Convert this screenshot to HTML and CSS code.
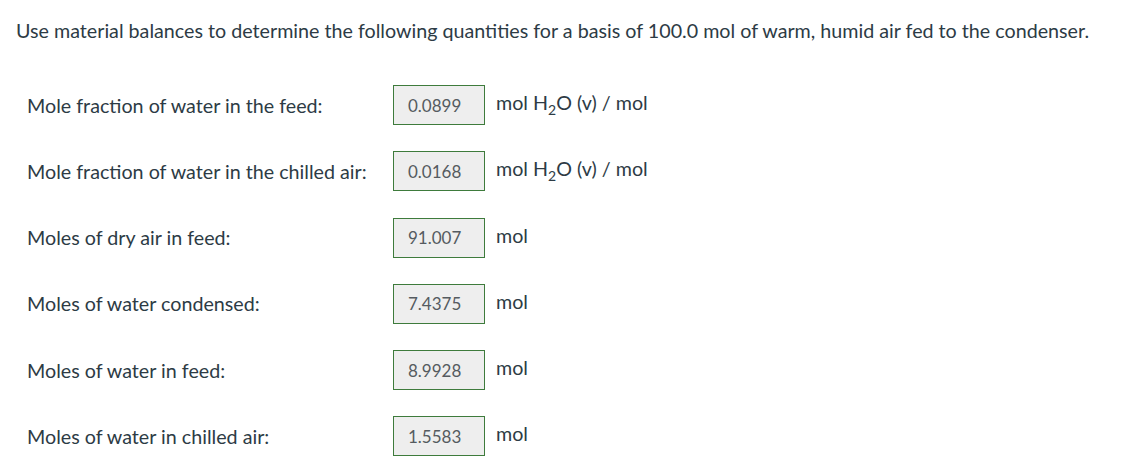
FILE: index.html
```
<!DOCTYPE html>
<html>
<head>
<meta charset="utf-8">
<link rel="stylesheet" href="styles.css">
</head>
<body>
<div class="page">
  <p class="intro">Use material balances to determine the following quantities for a basis of 100.0 mol of warm, humid air fed to the condenser.</p>
  <div class="answers">
    <div class="label">Mole fraction of water in the feed:</div>
    <div class="box">0.0899</div>
    <div class="unit">mol H<sub>2</sub>O (v) / mol</div>

    <div class="label">Mole fraction of water in the chilled air:</div>
    <div class="box">0.0168</div>
    <div class="unit">mol H<sub>2</sub>O (v) / mol</div>

    <div class="label">Moles of dry air in feed:</div>
    <div class="box">91.007</div>
    <div class="unit">mol</div>

    <div class="label">Moles of water condensed:</div>
    <div class="box">7.4375</div>
    <div class="unit">mol</div>

    <div class="label">Moles of water in feed:</div>
    <div class="box">8.9928</div>
    <div class="unit">mol</div>

    <div class="label">Moles of water in chilled air:</div>
    <div class="box">1.5583</div>
    <div class="unit">mol</div>
  </div>
</div>
</body>
</html>
```
FILE: styles.css
```
html, body {
  margin: 0;
  padding: 0;
  background: #ffffff;
}
.page {
  font-family: Lato, "Open Sans", sans-serif;
  color: #2d3b45;
  font-size: 19.7px;
  padding: 0 0 0 16px;
}
.intro {
  margin: 0;
  padding-top: 18px;
  line-height: 26px;
}
.answers {
  display: grid;
  grid-template-columns: 366px 92px auto;
  column-gap: 0;
  row-gap: 26.25px;
  margin-top: 41px;
  padding-left: 11px;
  align-items: center;
}
.label {
  line-height: 26px;
  padding-top: 1px;
}
.box {
  box-sizing: border-box;
  height: 40px;
  border: 1px solid #3e7b3c;
  background: #eeeeee;
  color: #555b60;
  padding-left: 14px;
  display: flex;
  align-items: center;
  font-size: 17px;
}
.unit {
  padding-left: 11px;
  line-height: 26px;
  align-self: start;
  padding-top: 5px;
}
.unit sub {
  font-size: 14px;
  line-height: 0;
}
```
